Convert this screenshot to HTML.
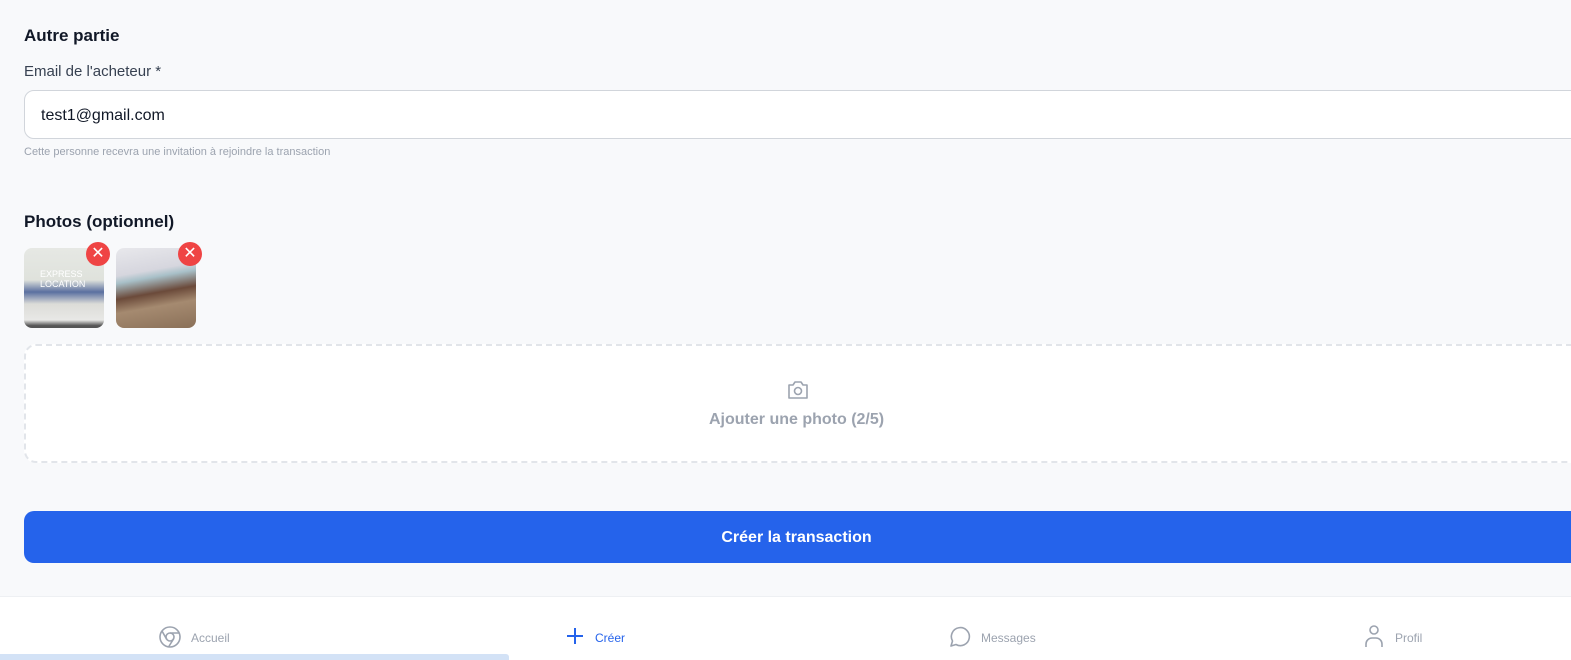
<!DOCTYPE html><html><head><style>
body{margin:0;width:1571px;height:659px;overflow:hidden;background:#f8f9fb;font-family:"Liberation Sans",sans-serif;position:relative}
.a{position:absolute}
</style></head><body>
<div class="a" style="left:24px;top:26px;font-size:17px;font-weight:bold;color:#111827">Autre partie</div>
<div class="a" style="left:24px;top:63px;font-size:15px;color:#374151">Email de l'acheteur *</div>
<div class="a" style="left:24px;top:90px;width:1560px;height:49px;box-sizing:border-box;border:1px solid #d1d5db;border-radius:10px;background:#fff;font-size:16px;color:#111827;line-height:49px;padding-left:16px">test1@gmail.com</div>
<div class="a" style="left:24px;top:146px;font-size:11px;color:#9ca3af">Cette personne recevra une invitation à rejoindre la transaction</div>
<div class="a" style="left:24px;top:212px;font-size:17px;font-weight:bold;color:#111827">Photos (optionnel)</div>
<div class="a" style="left:24px;top:248px;width:80px;height:80px;border-radius:8px;overflow:hidden;background:linear-gradient(#e6e8e4 0,#dfe2dc 40%,#5a6fa0 55%,#dcdcd8 70%,#e8e8e6 90%,#555 97%)"><div style="position:absolute;left:16px;top:21px;font-size:9px;color:#fff;line-height:10px">EXPRESS<br>LOCATION</div></div>
<div class="a" style="left:116px;top:248px;width:80px;height:80px;border-radius:8px;overflow:hidden;background:linear-gradient(170deg,#e8e8ec 0,#d6d6de 30%,#a8c0c8 38%,#6b4a3a 55%,#a58a70 70%,#8a7058 100%)"></div>
<div class="a" style="left:86px;top:242px;width:24px;height:24px;border-radius:50%;background:#ef4444;color:#fff;text-align:center;line-height:24px;font-size:16px">✕</div>
<div class="a" style="left:178px;top:242px;width:24px;height:24px;border-radius:50%;background:#ef4444;color:#fff;text-align:center;line-height:24px;font-size:16px">✕</div>
<div class="a" style="left:24px;top:344px;width:1560px;height:119px;box-sizing:border-box;border:2px dashed #e2e5ea;border-radius:12px;background:#fff"></div>
<svg class="a" style="left:786px;top:379px" width="24" height="22" viewBox="0 0 24 22" fill="none" stroke="#9ca3af" stroke-width="1.6"><path d="M3 6h4l2-3h6l2 3h4v13H3z" stroke-linejoin="round"/><circle cx="12" cy="12" r="3.5"/></svg>
<div class="a" style="left:709px;top:411px;font-size:16px;color:#9ca3af;font-weight:bold">Ajouter une photo (2/5)</div>
<div class="a" style="left:24px;top:511px;width:1560px;height:52px;border-radius:10px;background:#2563eb;color:#fff;font-size:16px;font-weight:bold;line-height:54px;text-align:center;box-sizing:border-box;padding-right:15px">Créer la transaction</div>
<div class="a" style="left:0;top:596px;width:1571px;height:63px;background:#fff;border-top:1px solid #eef0f3"></div>
<svg class="a" style="left:158px;top:625px" width="24" height="24" viewBox="0 0 24 24" fill="none" stroke="#9ca3af" stroke-width="1.6"><circle cx="12" cy="12" r="10"/><circle cx="12" cy="12" r="4"/><path d="M12 8h9M8.5 14L4 6M15.5 14l-5 8"/></svg>
<div class="a" style="left:191px;top:631px;font-size:12px;color:#9ca3af">Accueil</div>
<svg class="a" style="left:565px;top:626px" width="20" height="20" viewBox="0 0 20 20" stroke="#2563eb" stroke-width="2"><path d="M10 2v16M2 10h16"/></svg>
<div class="a" style="left:595px;top:631px;font-size:12px;color:#2563eb">Créer</div>
<svg class="a" style="left:948px;top:625px" width="24" height="24" viewBox="0 0 24 24" fill="none" stroke="#9ca3af" stroke-width="1.6"><path d="M3 21l1.5-5A9 9 0 1 1 8 19.5z" stroke-linejoin="round"/></svg>
<div class="a" style="left:981px;top:631px;font-size:12px;color:#9ca3af">Messages</div>
<svg class="a" style="left:1363px;top:624px" width="22" height="24" viewBox="0 0 22 24" fill="none" stroke="#9ca3af" stroke-width="1.6"><circle cx="11" cy="6" r="4"/><path d="M3 23v-3a6 6 0 0 1 6-6h4a6 6 0 0 1 6 6v3"/></svg>
<div class="a" style="left:1395px;top:631px;font-size:12px;color:#9ca3af">Profil</div>
<div class="a" style="left:0;top:654px;width:509px;height:6px;background:#d3e2f6;border-radius:0 3px 0 0"></div>
</body></html>
